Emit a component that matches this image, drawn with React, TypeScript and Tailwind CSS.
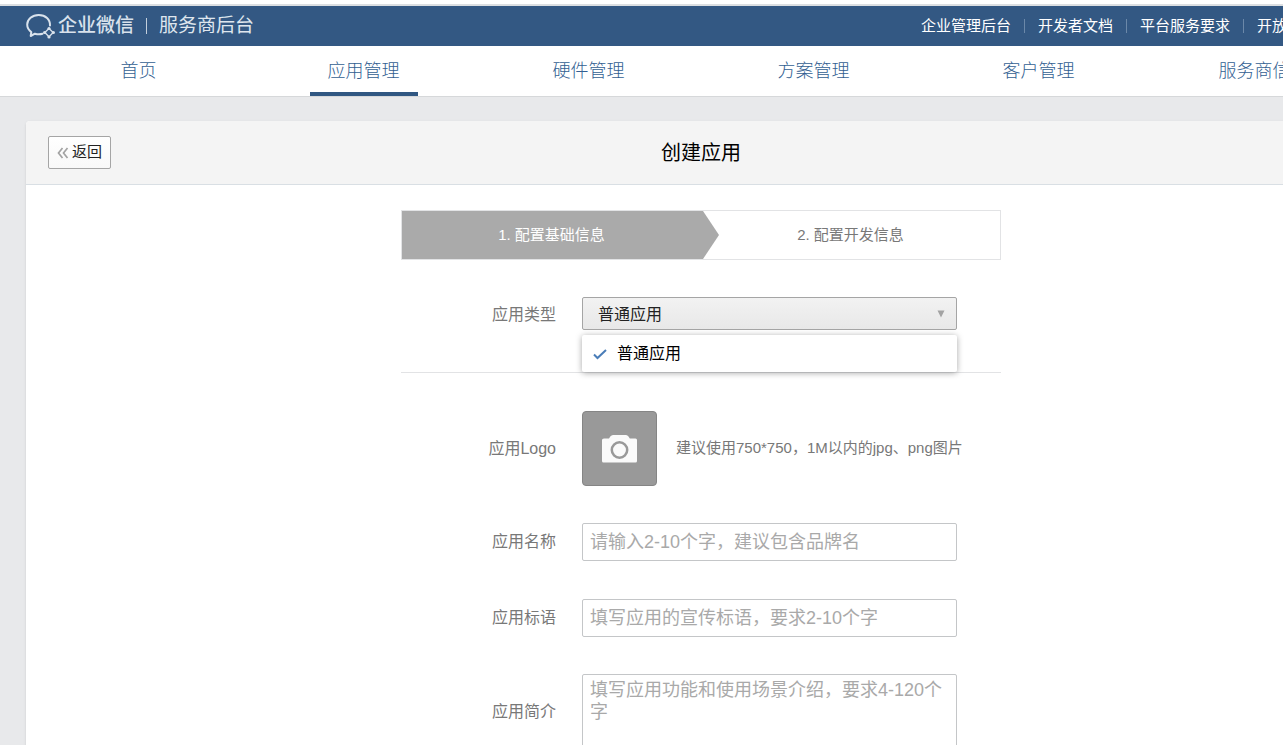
const topLinks = ['企业管理后台', '开发者文档', '平台服务要求', '开放平台', '退出']

const navItems = ['首页', '应用管理', '硬件管理', '方案管理', '客户管理', '服务商信息']

const activeNav = '应用管理'

const labelClass = 'w-[155px] shrink-0 text-right text-base text-[#787878]'
const fieldClass =
  'w-[375px] rounded-xs border border-[#c4c6c8] bg-white px-[7px] text-lg text-[#222] outline-none placeholder:text-[#a9a9a9]'

function Logo() {
  return (
    <svg viewBox="0 0 30 26" className="h-[26px] w-[30px]" fill="none" aria-hidden="true">
      <path
        d="M24 12.500C24.300 6.400 19.600 2 12.700 2 6.200 2 1.200 6.300 1.200 11.600c0 3.100 1.500 5.600 4.100 7.500L4.700 23l4.200-2.300c2.700.8 5 .9 7.600.1"
        stroke="#d9e2ec"
        strokeWidth="2"
        strokeLinecap="round"
        strokeLinejoin="round"
      />
      <path d="M23 15.500l4.200 4-4.200 4.300-4.200-4.300z" stroke="#d9e2ec" strokeWidth="1.300" />
      <g fill="#d9e2ec">
        <circle cx="23" cy="15.500" r="1.600" />
        <circle cx="27.400" cy="19.500" r="1.600" />
        <circle cx="23" cy="24" r="1.600" />
        <circle cx="18.600" cy="19.500" r="1.600" />
      </g>
    </svg>
  )
}

function TopBar() {
  return (
    <header className="mt-1 border-t-2 border-[#dcdfe2] bg-[#335883]">
      <div className="mx-auto flex h-10 w-[1350px] items-center">
        <Logo />
        <span className="ml-0.5 text-[19px] font-medium text-[#d9e2ec]">企业微信</span>
        <span className="mx-3 h-4 w-px bg-[#c3cfdc]" />
        <span className="text-[19px] text-[#dfe6ee]">服务商后台</span>
        <nav className="ml-auto flex items-center pr-0.5 text-[15px] text-white">
          {topLinks.map((link, i) => (
            <div key={link} className="flex items-center">
              {i > 0 && <span className="mx-[13px] h-3.5 w-px bg-[#6b88a9]" />}
              <a href="#">{link}</a>
            </div>
          ))}
        </nav>
      </div>
    </header>
  )
}

function MainNav() {
  return (
    <nav className="border-b border-[#d6d8da] bg-white shadow-xs">
      <div className="mx-auto grid w-[1350px] grid-cols-6">
        {navItems.map((item) => (
          <a
            key={item}
            href="#"
            className={
              item === activeNav
                ? 'mx-auto flex h-[50px] items-center border-y-4 border-t-transparent border-b-[#305782] px-[18px] text-lg font-light text-[#335f92]'
                : 'mx-auto flex h-[50px] items-center px-[18px] text-lg font-light text-[#335f92]'
            }
          >
            {item}
          </a>
        ))}
      </div>
    </nav>
  )
}

function Steps() {
  return (
    <ol className="flex h-[50px] border border-[#e2e3e5] text-[15px]">
      <li className="flex flex-1 items-center justify-center bg-[#aaa] text-white">1. 配置基础信息</li>
      <li className="flex flex-1 items-center text-[#787878]">
        <svg viewBox="0 0 20 48" className="h-12 w-5" aria-hidden="true">
          <path d="M0 0h2l16 24L2 48H0z" fill="#aaa" />
        </svg>
        <span className="flex-1 pr-5 text-center">2. 配置开发信息</span>
      </li>
    </ol>
  )
}

function TypeSelect() {
  return (
    <div className="relative w-[375px]">
      <select
        id="app-type"
        className="block h-[33px] w-full appearance-none rounded-xs border border-[#a5a5a5] bg-linear-to-b from-[#f2f2f2] to-[#e8e8e8] px-[15px] pt-0.5 text-base text-[#222] outline-none"
      >
        <option>普通应用</option>
      </select>
      <svg viewBox="0 0 8 8" className="pointer-events-none absolute top-[13px] right-3 size-2" aria-hidden="true">
        <path d="M0.500 0.500h7L4 7.500z" fill="#a3a3a3" />
      </svg>
      <ul
        role="listbox"
        aria-label="应用类型"
        className="absolute top-full left-0 mt-[5px] w-full rounded-xs bg-white shadow-[0_1px_6px_rgba(0,0,0,0.35)]"
      >
        <li role="option" aria-selected="true" className="flex h-[37px] items-center gap-2.5 px-[11px] text-base text-black">
          <svg viewBox="0 0 14 12" className="h-3 w-3.5" fill="none" aria-hidden="true">
            <path d="M1 6.500l3.500 3.500L13 2" stroke="#4a7db8" strokeWidth="2" />
          </svg>
          普通应用
        </li>
      </ul>
    </div>
  )
}

function LogoUpload() {
  return (
    <button
      id="app-logo"
      type="button"
      aria-label="上传应用Logo"
      className="flex size-[75px] items-center justify-center rounded-sm border border-[#858585] bg-[#999]"
    >
      <svg viewBox="0 0 36 28" className="h-7 w-9" aria-hidden="true">
        <path
          d="M2 3.500h5l1.300-2Q9.500 0 11 0h13q1.500 0 2.500 1.500l1.300 2H33.500q1.500 0 1.500 1.500v21q0 1.500-1.500 1.500H1.500Q0 27.500 0 26V5Q0 3.500 2 3.500z"
          fill="#fafafa"
        />
        <circle cx="17.500" cy="15" r="7.700" fill="none" stroke="#999" strokeWidth="2.500" />
      </svg>
    </button>
  )
}

export default function App() {
  return (
    <div
      lang="zh-CN"
      className="min-h-screen overflow-x-hidden bg-white font-['Liberation_Sans','Noto_Sans_CJK_SC',sans-serif]"
    >
      <div className="flex min-h-screen min-w-[1402px] flex-col">
        <TopBar />
        <MainNav />

        <div className="flex-1 bg-[#e8e9eb] pt-6">
          <main className="mx-auto w-[1350px] rounded-t-sm bg-white shadow-sm">
            <div className="grid h-16 grid-cols-3 items-center rounded-t-sm border-b border-[#d9dfe4] bg-[#f4f4f4] px-[22px]">
              <button
                type="button"
                className="flex h-[33px] w-[63px] items-center justify-center gap-[3px] rounded-xs border border-[#a5a5a5] bg-linear-to-b from-white to-[#f8f8f8] text-[15px] text-[#222]"
              >
                <svg viewBox="0 0 12 12" className="size-3" fill="none" stroke="#a3a3a3" strokeWidth="1.700" aria-hidden="true">
                  <path d="M5.500 1L1.500 6l4 5M10.500 1l-4 5 4 5" />
                </svg>
                返回
              </button>
              <h1 className="text-center text-xl text-black">创建应用</h1>
            </div>

            <form className="mx-auto w-[600px] pt-[25px] pb-10">
              <Steps />

              <div className="flex items-center gap-[26px] border-b border-[#e2e3e5] pt-[37px] pb-[42px]">
                <label htmlFor="app-type" className={`${labelClass} pt-0.5`}>应用类型</label>
                <TypeSelect />
              </div>

              <div className="mt-[38px] flex items-center gap-[26px]">
                <label htmlFor="app-logo" className={labelClass}>应用Logo</label>
                <div className="flex items-center gap-[19px]">
                  <LogoUpload />
                  <span className="text-[15px] text-[#787878]">建议使用750*750，1M以内的jpg、png图片</span>
                </div>
              </div>

              <div className="mt-[37px] flex items-center gap-[26px]">
                <label htmlFor="app-name" className={labelClass}>应用名称</label>
                <input
                  id="app-name"
                  type="text"
                  placeholder="请输入2-10个字，建议包含品牌名"
                  className={`${fieldClass} h-[38px]`}
                />
              </div>

              <div className="mt-[38px] flex items-center gap-[26px]">
                <label htmlFor="app-slogan" className={labelClass}>应用标语</label>
                <input
                  id="app-slogan"
                  type="text"
                  placeholder="填写应用的宣传标语，要求2-10个字"
                  className={`${fieldClass} h-[38px]`}
                />
              </div>

              <div className="mt-[37px] flex items-center gap-[26px]">
                <label htmlFor="app-intro" className={labelClass}>应用简介</label>
                <textarea
                  id="app-intro"
                  placeholder="填写应用功能和使用场景介绍，要求4-120个字"
                  className={`${fieldClass} h-[75px] resize-none pt-1 leading-[22px]`}
                />
              </div>
            </form>
          </main>
        </div>
      </div>
    </div>
  )
}
